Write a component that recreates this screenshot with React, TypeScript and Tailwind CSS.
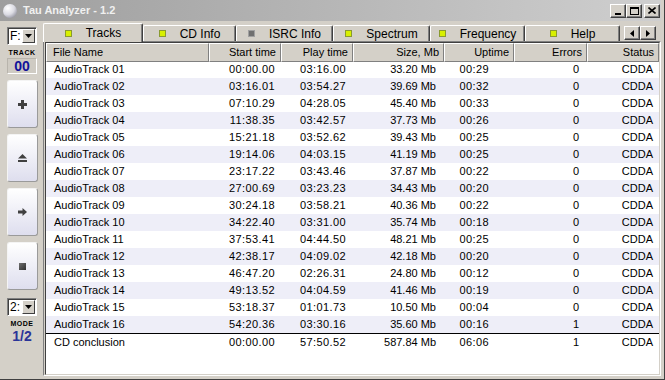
const rows = [
  ["AudioTrack 01", "00:00.00", "03:16.00", "33.20 Mb", "00:29", "0"],
  ["AudioTrack 02", "03:16.01", "03:54.27", "39.69 Mb", "00:32", "0"],
  ["AudioTrack 03", "07:10.29", "04:28.05", "45.40 Mb", "00:33", "0"],
  ["AudioTrack 04", "11:38.35", "03:42.57", "37.73 Mb", "00:26", "0"],
  ["AudioTrack 05", "15:21.18", "03:52.62", "39.43 Mb", "00:25", "0"],
  ["AudioTrack 06", "19:14.06", "04:03.15", "41.19 Mb", "00:25", "0"],
  ["AudioTrack 07", "23:17.22", "03:43.46", "37.87 Mb", "00:22", "0"],
  ["AudioTrack 08", "27:00.69", "03:23.23", "34.43 Mb", "00:20", "0"],
  ["AudioTrack 09", "30:24.18", "03:58.21", "40.36 Mb", "00:22", "0"],
  ["AudioTrack 10", "34:22.40", "03:31.00", "35.74 Mb", "00:18", "0"],
  ["AudioTrack 11", "37:53.41", "04:44.50", "48.21 Mb", "00:25", "0"],
  ["AudioTrack 12", "42:38.17", "04:09.02", "42.18 Mb", "00:20", "0"],
  ["AudioTrack 13", "46:47.20", "02:26.31", "24.80 Mb", "00:12", "0"],
  ["AudioTrack 14", "49:13.52", "04:04.59", "41.46 Mb", "00:19", "0"],
  ["AudioTrack 15", "53:18.37", "01:01.73", "10.50 Mb", "00:04", "0"],
  ["AudioTrack 16", "54:20.36", "03:30.16", "35.60 Mb", "00:16", "1"],
];

const tabs = [
  { label: "Tracks", w: "w-[100px]", on: true },
  { label: "CD Info", w: "w-[93px]", on: true },
  { label: "ISRC Info", w: "w-[97px]", on: false },
  { label: "Spectrum", w: "w-[97px]", on: true },
  { label: "Frequency", w: "w-[95px]", on: true },
  { label: "Help", w: "w-[95px]", on: true },
];

const grid = "grid grid-cols-[163px_72px_72px_91px_70px_73px_1fr]";

function Row({ cells, shade, top }: { cells: string[]; shade?: boolean; top?: boolean }) {
  return (
    <div
      className={`${grid} h-[17px] items-center text-[11px] text-black ${shade ? "bg-[#eeeef8]" : "bg-white"} ${top ? "border-t border-black h-[18px]" : ""}`}
    >
      <span className="pl-[8px] whitespace-nowrap">{cells[0]}</span>
      <span className="text-right pr-[6px] tracking-[0.4px]">{cells[1]}</span>
      <span className="text-right pr-[7px] tracking-[0.4px]">{cells[2]}</span>
      <span className="text-right pr-[8px]">{cells[3]}</span>
      <span className="text-right pr-[25px] tracking-[0.4px]">{cells[4]}</span>
      <span className="text-right pr-[8px]">{cells[5]}</span>
      <span className="text-right pr-[6px]">CDDA</span>
    </div>
  );
}

function Combo({ text }: { text: string }) {
  return (
    <div className="w-[30px] h-[18px] flex bg-white border border-t-[#808080] border-l-[#808080] border-b-white border-r-white shadow-[inset_1px_1px_0_#404040]">
      <span className="flex-1 pl-[2px] text-[12px] leading-[16px] text-black">{text}</span>
      <div className="w-[13px] h-[14px] mt-[1px] mr-[1px] bg-[#d4d0c8] flex items-center justify-center border border-t-white border-l-white border-b-[#404040] border-r-[#404040]">
        <svg width="7" height="4" viewBox="0 0 7 4">
          <path d="M0 0h7L3.5 4z" fill="#000" />
        </svg>
      </div>
    </div>
  );
}

function SideButton({ children }: { children: React.ReactNode }) {
  return (
    <div className="w-[31px] h-[48px] rounded-[3px] bg-linear-to-b from-white to-[#dedeee] border border-t-[#f4f4f4] border-l-[#f4f4f4] border-b-[#9a9a9a] border-r-[#9a9a9a] flex items-center justify-center">
      {children}
    </div>
  );
}

function TitleButton({ children }: { children: React.ReactNode }) {
  return (
    <div className="w-[16px] h-[14px] bg-[#d4d0c8] border border-t-white border-l-white border-b-[#404040] border-r-[#404040] shadow-[inset_-1px_-1px_0_#808080] flex items-center justify-center">
      {children}
    </div>
  );
}

export default function App() {
  return (
    <div className="w-[665px] h-[380px] bg-[#d4d0c8] flex flex-col overflow-hidden font-['Liberation_Sans',Arial,sans-serif] border-r border-b border-r-[#404040] border-b-[#404040]">
      {/* Title bar */}
      <div className="h-[21px] mr-[3px] flex items-center bg-linear-to-r from-[#9e9e9e] to-[#cfcfcf]">
        <svg width="16" height="16" viewBox="0 0 16 16" className="ml-[2px]">
          <defs>
            <radialGradient id="orb" cx="0.35" cy="0.3" r="0.75">
              <stop offset="0" stopColor="#ffffff" />
              <stop offset="0.6" stopColor="#dcdce4" />
              <stop offset="1" stopColor="#9c9ca8" />
            </radialGradient>
          </defs>
          <circle cx="8" cy="8" r="7" fill="url(#orb)" />
        </svg>
        <span className="ml-[5px] text-[11px] font-bold text-[#f0f0f0]">Tau Analyzer - 1.2</span>
        <div className="ml-auto mr-[1px] flex items-center">
          <TitleButton>
            <div className="w-[6px] h-[2px] bg-black mt-[6px]" />
          </TitleButton>
          <TitleButton>
            <div className="w-[9px] h-[8px] border border-black border-t-2" />
          </TitleButton>
          <div className="w-[2px]" />
          <TitleButton>
            <svg width="8" height="7" viewBox="0 0 8 7">
              <path d="M0.5 0.5L7.5 6.5M7.5 0.5L0.5 6.5" stroke="#000" strokeWidth="1.6" />
            </svg>
          </TitleButton>
        </div>
      </div>

      <div className="flex-1 flex pr-[3px] pb-[3px]">
        {/* Left panel */}
        <div className="w-[43px] flex flex-col items-center pl-[1px]">
          <div className="mt-[6px]">
            <Combo text="F:" />
          </div>
          <span className="mt-[4px] text-[7px] leading-[8px] font-bold tracking-[0.5px] text-black">TRACK</span>
          <div className="w-[30px] h-[16px] mt-[1px] flex items-center justify-center bg-[#cfcbc3] border border-t-[#b8b4ac] border-l-[#b8b4ac] border-b-white border-r-white">
            <span className="text-[14px] leading-[14px] font-bold text-[#12129a]">00</span>
          </div>
          <div className="mt-[6px] flex flex-col gap-[6px]">
            <SideButton>
              <svg width="9" height="9" viewBox="0 0 9 9">
                <path d="M3 0h3v3h3v3H6v3H3V6H0V3h3z" fill="#404040" />
              </svg>
            </SideButton>
            <SideButton>
              <svg width="9" height="8" viewBox="0 0 9 8">
                <path d="M4.5 0L9 4.5H0z M0 6h9v2H0z" fill="#404040" />
              </svg>
            </SideButton>
            <SideButton>
              <svg width="9" height="8" viewBox="0 0 9 8">
                <path d="M0 2.5h4.5V0L9 4 4.5 8V5.5H0z" fill="#404040" />
              </svg>
            </SideButton>
            <SideButton>
              <div className="w-[7px] h-[7px] bg-linear-to-br from-[#707070] to-[#303030]" />
            </SideButton>
          </div>
          <div className="mt-[8px]">
            <Combo text="2:" />
          </div>
          <span className="mt-[4px] text-[7px] leading-[8px] font-bold tracking-[0.5px] text-black">MODE</span>
          <span className="text-[14px] leading-[16px] font-bold text-[#2a3498]">1/2</span>
        </div>

        {/* Right side */}
        <div className="flex-1 flex flex-col">
          <div className="h-[20px] flex items-end relative z-10">
            {tabs.map((t, i) => (
              <div
                key={t.label}
                className={`${t.w} flex items-center justify-center gap-[14px] bg-[#d4d0c8] border-l border-t border-r border-l-white border-t-white border-r-[#404040] shadow-[inset_-1px_0_0_#808080] ${i === 0 ? "h-[19px] -mb-[1px] rounded-t-[2px]" : "h-[16px] rounded-t-[2px]"}`}
              >
                <div
                  className={`w-[7px] h-[7px] border ${t.on ? "bg-[#d8f000] border-[#8a9a30]" : "bg-[#707070] border-[#a0a0a0]"}`}
                />
                <span className="text-[12px] text-black whitespace-nowrap">{t.label}</span>
              </div>
            ))}
            <div className="ml-[4px] mb-[1px] flex">
              <TitleButton>
                <svg width="4" height="7" viewBox="0 0 4 7">
                  <path d="M4 0v7L0 3.5z" fill="#000" />
                </svg>
              </TitleButton>
              <TitleButton>
                <svg width="4" height="7" viewBox="0 0 4 7">
                  <path d="M0 0v7l4-3.5z" fill="#000" />
                </svg>
              </TitleButton>
            </div>
          </div>

          {/* List */}
          <div className="flex-1 border border-t-[#808080] border-l-[#808080] border-b-white border-r-white">
            <div className="h-full bg-white border border-t-[#404040] border-l-[#404040] border-b-[#d4d0c8] border-r-[#d4d0c8] ml-[1px] overflow-hidden">
              <div className={`${grid} h-[18px] text-[11px] text-black`}>
                {["File Name", "Start time", "Play time", "Size, Mb", "Uptime", "Errors", "Status"].map((h, i) => (
                  <div
                    key={h}
                    className={`bg-[#d4d0c8] border border-t-white border-l-white border-b-[#808080] border-r-[#808080] shadow-[inset_0_-1px_0_#d4d0c8] flex items-center ${i === 0 ? "pl-[6px]" : "justify-end pr-[4px]"}`}
                  >
                    {h}
                  </div>
                ))}
              </div>
              {rows.map((r, i) => (
                <Row key={r[0]} cells={r} shade={i % 2 === 1} />
              ))}
              <Row cells={["CD conclusion", "00:00.00", "57:50.52", "587.84 Mb", "06:06", "1"]} top />
            </div>
          </div>
        </div>
      </div>
    </div>
  );
}
